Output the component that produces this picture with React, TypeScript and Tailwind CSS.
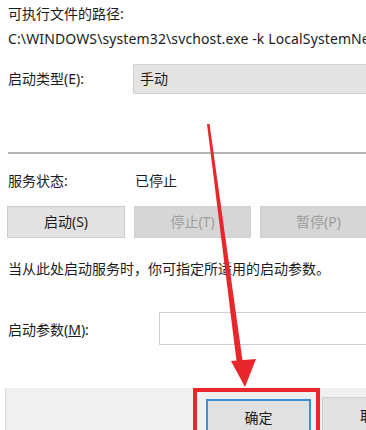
export default function App() {
  return (
    <div className="relative w-[366px] h-[430px] overflow-hidden bg-white text-[#1b1b1b] text-[14px] leading-[20px] font-['Noto_Sans','Noto_Sans_CJK_SC',sans-serif]">
      <div className="flex flex-col pl-[8px] pt-[4px]">
        <div>可执行文件的路径:</div>
        <div className="mt-[5px] whitespace-nowrap tracking-[0.12px]">
          {"C:\\WINDOWS\\system32\\svchost.exe -k LocalSystemNetworkRestricted -p"}
        </div>

        {/* startup type */}
        <div className="mt-[15px] flex items-center">
          <div className="w-[125px] shrink-0">启动类型(E):</div>
          <div className="h-[30px] w-[260px] shrink-0 flex items-center pl-[6px] bg-[#e4e4e4] border border-[#d2d2d2]">
            手动
          </div>
        </div>

        <div className="mt-[58px] h-[2px] bg-[#b4b4b4]" />

        {/* status */}
        <div className="mt-[17px] flex">
          <div className="w-[127px] shrink-0">服务状态:</div>
          <div>已停止</div>
        </div>

        <div className="mt-[15px] flex gap-[9px] -ml-px">
          <button className="w-[118px] h-[32px] shrink-0 bg-[#e2e2e2] border border-[#cdcdcd]">启动(S)</button>
          <button className="w-[117px] h-[32px] shrink-0 bg-[#d6d6d6] border border-[#d0d0d0] text-[#9c9c9c]">停止(T)</button>
          <button className="w-[117px] h-[32px] shrink-0 bg-[#d6d6d6] border border-[#d0d0d0] text-[#9c9c9c]">暂停(P)</button>
        </div>

        <div className="mt-[21px] whitespace-nowrap">当从此处启动服务时，你可指定所适用的启动参数。</div>

        {/* params */}
        <div className="mt-[33px] flex items-center">
          <div className="w-[151px] shrink-0 pt-[3px]">
            启动参数(<span className="underline">M</span>):
          </div>
          <div className="h-[33px] w-[230px] shrink-0 bg-white border border-[#cfcfcf]" />
        </div>
      </div>

      {/* footer */}
      <div className="mt-[43px] ml-[5px] h-[60px] bg-[#f0f0f0] border-l border-[#dcdcdc] flex items-start">
        <div className="ml-[187px] w-[127px] h-[50px] shrink-0 border-[4px] border-[#e8262b] pl-[9px] pt-[7px]">
          <button className="w-[105px] h-[40px] bg-[#e1e1e1] border-2 border-[#3c8fd6] pb-[3px]">确定</button>
        </div>
        <button className="ml-[2px] mt-[9px] w-[100px] h-[40px] shrink-0 whitespace-nowrap bg-[#e1e1e1] border border-[#cfcfcf] text-left pl-[37px] pb-[3px]">
          取消
        </button>
      </div>

      {/* annotation arrow */}
      <svg className="absolute left-0 top-0 pointer-events-none" width="366" height="430" viewBox="0 0 366 430">
        <polygon points="207,124 209.5,124 243,364 237,365" fill="#e8262b" />
        <polygon points="231,361 256,359 245,387" fill="#e8262b" />
      </svg>
    </div>
  );
}
